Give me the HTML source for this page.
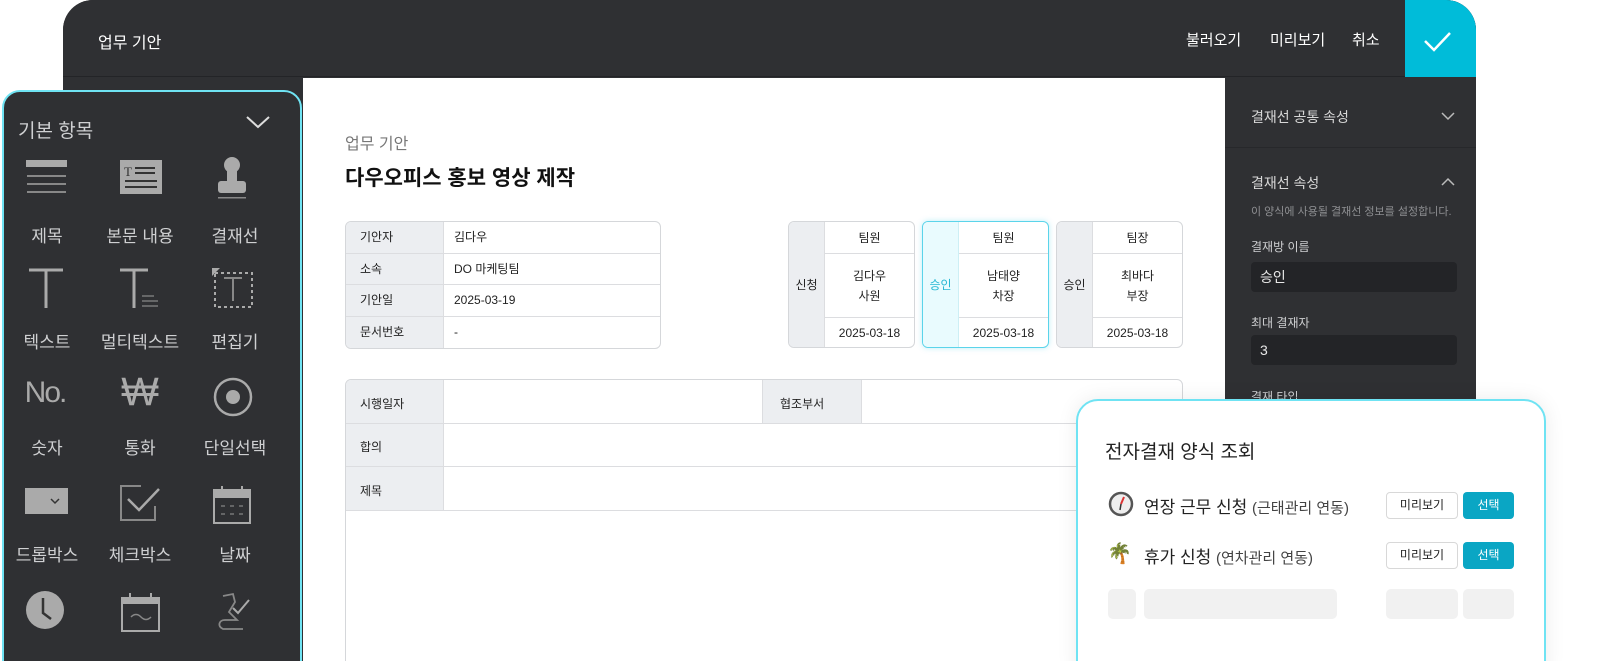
<!DOCTYPE html>
<html><head><meta charset="utf-8"><style>
*{box-sizing:border-box;margin:0;padding:0}
html,body{width:1600px;height:661px;overflow:hidden}
body{background:#fff;font-family:"Liberation Sans","Noto Sans CJK KR",sans-serif;color:#222}
#root{position:relative;width:1600px;height:661px;overflow:hidden}
.abs{position:absolute}
.frame{left:63px;top:0;width:1413px;height:661px;background:#2f3033;border-radius:30px 30px 0 0;overflow:hidden}
.topbar{left:0;top:0;width:1413px;height:77px;background:#2f3033;border-bottom:1px solid #232427}
.check{left:1342px;top:0;width:71px;height:77px;background:#00bcd9}
.canvas{left:240px;top:78px;width:922px;height:583px;background:#fff}
.rp{left:1162px;top:78px;width:251px;height:583px;background:#2f3033}
.lp{left:2px;top:90px;width:300px;height:590px;background:#2f3033;border:2px solid #6fe3f3;border-radius:18px}
.ic{position:absolute;width:100px;text-align:center;color:#cfd0d2;font-size:17px}
.t1{left:345px;top:221px;width:316px;border:1px solid #d5d7da;border-radius:6px;overflow:hidden;font-size:12px}
.t1 div{height:31.5px;display:flex;border-bottom:1px solid #dcdde0}
.t1 div:last-child{border-bottom:none}
.t1 b{font-weight:normal;width:98px;background:#eceef1;border-right:1px solid #dcdde0;padding:0 14px;line-height:31px}
.t1 span{padding:0 10px;line-height:31px}
.ap{top:221px;width:127px;height:127px;border:1px solid #d5d7da;border-radius:6px;overflow:hidden;font-size:12px}
.ap .l{position:absolute;left:0;top:0;width:36px;height:100%;background:#eceef1;border-right:1px solid #dcdde0;display:flex;align-items:center;justify-content:center}
.ap .c{position:absolute;left:36px;right:0;text-align:center}
.pop{left:1076px;top:399px;width:470px;height:290px;background:#fff;border:2px solid #6fe3f3;border-radius:22px;box-shadow:0 0 20px rgba(0,0,0,.08)}
.btn{position:absolute;width:72px;height:27px;border:1px solid #d8d8d8;border-radius:4px;font-size:12px;text-align:center;line-height:25px}
.sel{position:absolute;width:51px;height:27px;background:#0aa6c4;color:#fff;border-radius:4px;font-size:12px;text-align:center;line-height:27px}
.sk{position:absolute;background:#f1f1f1;border-radius:5px;height:30px;top:589px}
.rl{color:#cfd0d2;font-size:14px;position:absolute;left:1251px}
.inp{position:absolute;left:1251px;width:206px;height:30px;background:#232427;border-radius:4px;color:#e8e8e8;font-size:14px;padding-left:9px;line-height:30px}
</style></head><body><div id="root">
<div class="abs frame">
 <div class="abs topbar"></div>
 <div class="abs" style="left:35px;top:29px;color:#fff;font-size:16px">업무 기안</div>
 <div class="abs" style="left:1123px;top:29px;color:#fff;font-size:15px">불러오기</div>
 <div class="abs" style="left:1207px;top:29px;color:#fff;font-size:15px">미리보기</div>
 <div class="abs" style="left:1289px;top:29px;color:#fff;font-size:15px">취소</div>
 <div class="abs check"><svg width="71" height="77"><path d="M20 41 L29 50 L45 33" stroke="#fff" stroke-width="2.5" fill="none"/></svg></div>
 <div class="abs canvas"></div>
 <div class="abs rp">
  <div style="height:70px;border-bottom:1px solid #27282b"></div>
 </div>
</div>
<div class="abs" style="left:1251px;top:107px;color:#d8d8d8;font-size:14px">결재선 공통 속성</div>
<svg class="abs" style="left:1440px;top:110px" width="16" height="12"><path d="M2 3 L8 9 L14 3" stroke="#bbb" stroke-width="1.5" fill="none"/></svg>
<div class="abs" style="left:1251px;top:173px;color:#d8d8d8;font-size:14px">결재선 속성</div>
<svg class="abs" style="left:1440px;top:176px" width="16" height="12"><path d="M2 9 L8 3 L14 9" stroke="#bbb" stroke-width="1.5" fill="none"/></svg>
<div class="abs" style="left:1251px;top:203px;color:#8e8f92;font-size:11px">이 양식에 사용될 결재선 정보를 설정합니다.</div>
<div class="rl" style="top:238px;font-size:12px">결재방 이름</div>
<div class="inp" style="top:262px">승인</div>
<div class="rl" style="top:314px;font-size:12px">최대 결재자</div>
<div class="inp" style="top:335px">3</div>
<div class="rl" style="top:388px;font-size:12px">결재 타입</div>

<div class="abs" style="left:345px;top:130px;color:#777;font-size:16px">업무 기안</div>
<div class="abs" style="left:345px;top:162px;color:#111;font-size:21px;font-weight:bold">다우오피스 홍보 영상 제작</div>
<div class="abs t1">
 <div><b>기안자</b><span>김다우</span></div>
 <div><b>소속</b><span>DO 마케팅팀</span></div>
 <div><b>기안일</b><span>2025-03-19</span></div>
 <div><b>문서번호</b><span>-</span></div>
</div>
<div class="abs ap" style="left:788px"><div class="l">신청</div>
 <div class="c" style="top:0;height:32px;line-height:32px;border-bottom:1px solid #dcdde0">팀원</div>
 <div class="c" style="top:44px;line-height:20px">김다우<br>사원</div>
 <div class="c" style="top:95px;height:31px;line-height:31px;border-top:1px solid #dcdde0">2025-03-18</div></div>
<div class="abs ap" style="left:922px;border:1.5px solid #5bd4ea;box-shadow:0 0 6px rgba(90,210,235,.4)"><div class="l" style="background:#e9fbfe;color:#27b8d4;border-color:#cdeff5">승인</div>
 <div class="c" style="top:0;height:32px;line-height:32px;border-bottom:1px solid #dcdde0">팀원</div>
 <div class="c" style="top:44px;line-height:20px">남태양<br>차장</div>
 <div class="c" style="top:95px;height:31px;line-height:31px;border-top:1px solid #dcdde0">2025-03-18</div></div>
<div class="abs ap" style="left:1056px"><div class="l">승인</div>
 <div class="c" style="top:0;height:32px;line-height:32px;border-bottom:1px solid #dcdde0">팀장</div>
 <div class="c" style="top:44px;line-height:20px">최바다<br>부장</div>
 <div class="c" style="top:95px;height:31px;line-height:31px;border-top:1px solid #dcdde0">2025-03-18</div></div>

<div class="abs" style="left:345px;top:379px;width:838px;height:300px;border:1px solid #d5d7da;border-radius:6px;font-size:12px;overflow:hidden">
 <div class="abs" style="left:0;top:0;width:98px;height:130px;background:#eceef1;border-right:1px solid #dcdde0"></div>
 <div class="abs" style="left:416px;top:0;width:100px;height:43px;background:#eceef1;border-left:1px solid #dcdde0;border-right:1px solid #dcdde0"></div>
 <div class="abs" style="left:0;top:43px;width:838px;border-top:1px solid #dcdde0"></div>
 <div class="abs" style="left:0;top:86px;width:838px;border-top:1px solid #dcdde0"></div>
 <div class="abs" style="left:0;top:130px;width:838px;border-top:1px solid #dcdde0"></div>
 <div class="abs" style="left:14px;top:15px">시행일자</div>
 <div class="abs" style="left:434px;top:15px">협조부서</div>
 <div class="abs" style="left:14px;top:58px">합의</div>
 <div class="abs" style="left:14px;top:102px">제목</div>
</div>

<div class="abs lp"></div>
<div class="abs" style="left:18px;top:116px;color:#cfd0d2;font-size:19px">기본 항목</div>
<svg class="abs" style="left:245px;top:114px" width="26" height="16"><path d="M2 3 L13 13 L24 3" stroke="#ddd" stroke-width="2" fill="none"/></svg>
<svg class="abs" style="left:26px;top:160px" width="42" height="40"><rect x="0" y="0" width="41" height="7" fill="#aaa"/><rect x="1" y="15" width="39" height="2" fill="#888"/><rect x="1" y="23" width="39" height="2" fill="#888"/><rect x="1" y="31" width="39" height="2" fill="#888"/></svg>
<svg class="abs" style="left:120px;top:160px" width="42" height="36"><rect width="42" height="34" fill="#aaa"/><text x="4" y="16" font-size="13" fill="#333" font-family="Liberation Serif">T</text><rect x="15" y="7" width="20" height="2" fill="#333"/><rect x="15" y="12" width="20" height="2" fill="#333"/><rect x="5" y="20" width="32" height="2" fill="#333"/><rect x="5" y="26" width="32" height="2" fill="#333"/></svg>
<svg class="abs" style="left:210px;top:155px" width="44" height="46"><circle cx="22" cy="10" r="8" fill="#aaa"/><rect x="17" y="14" width="10" height="14" fill="#aaa"/><rect x="8" y="26" width="28" height="12" rx="3" fill="#aaa"/><rect x="8" y="42" width="28" height="1.5" fill="#888"/></svg>
<div class="ic" style="left:-3px;top:222px">제목</div>
<div class="ic" style="left:90px;top:222px">본문 내용</div>
<div class="ic" style="left:185px;top:222px">결재선</div>
<svg class="abs" style="left:27px;top:268px" width="40" height="42"><path d="M2 2 H36 M19 2 V40" stroke="#aaa" stroke-width="3"/></svg>
<svg class="abs" style="left:118px;top:268px" width="46" height="42"><path d="M2 2 H30 M16 2 V40" stroke="#aaa" stroke-width="3"/><path d="M24 28 H36 M24 33 H40 M24 38 H40" stroke="#888" stroke-width="1.2"/></svg>
<svg class="abs" style="left:212px;top:268px" width="44" height="42"><rect x="3" y="5" width="37" height="34" fill="none" stroke="#aaa" stroke-width="2" stroke-dasharray="3 3"/><path d="M0 0 L8 0 L0 8Z" fill="#aaa"/><path d="M12 10 H30 M21 10 V33" stroke="#888" stroke-width="2"/></svg>
<div class="ic" style="left:-3px;top:328px">텍스트</div>
<div class="ic" style="left:90px;top:328px">멀티텍스트</div>
<div class="ic" style="left:185px;top:328px">편집기</div>
<div class="ic" style="left:-5px;top:376px;font-size:30px;color:#aaa;letter-spacing:-2px">No.</div>
<div class="ic" style="left:90px;top:370px;font-size:40px;color:#aaa">₩</div>
<svg class="abs" style="left:212px;top:376px" width="42" height="42"><circle cx="21" cy="21" r="18" fill="none" stroke="#aaa" stroke-width="2.5"/><circle cx="21" cy="21" r="7" fill="#aaa"/></svg>
<div class="ic" style="left:-3px;top:434px">숫자</div>
<div class="ic" style="left:90px;top:434px">통화</div>
<div class="ic" style="left:185px;top:434px">단일선택</div>
<svg class="abs" style="left:25px;top:488px" width="44" height="30"><rect width="43" height="26" fill="#aaa"/><path d="M26 11 L30 15 L34 11" stroke="#333" stroke-width="1.5" fill="none"/></svg>
<svg class="abs" style="left:119px;top:484px" width="44" height="40"><path d="M22 2 H2 V36 H36 V22" stroke="#888" stroke-width="2" fill="none"/><path d="M9 15 L20 26 L40 5" stroke="#aaa" stroke-width="2.5" fill="none"/></svg>
<svg class="abs" style="left:213px;top:484px" width="40" height="42"><rect x="1" y="6" width="36" height="33" fill="none" stroke="#aaa" stroke-width="2"/><rect x="1" y="6" width="36" height="8" fill="#aaa"/><path d="M9 2V8M29 2V8" stroke="#aaa" stroke-width="2"/><path d="M8 22h4M17 22h4M26 22h4M8 30h4M17 30h4M26 30h4" stroke="#777" stroke-width="1.5"/></svg>
<div class="ic" style="left:-3px;top:541px">드롭박스</div>
<div class="ic" style="left:90px;top:541px">체크박스</div>
<div class="ic" style="left:185px;top:541px">날짜</div>
<svg class="abs" style="left:25px;top:590px" width="42" height="42"><circle cx="20" cy="20" r="19" fill="#aaa"/><path d="M18 8 V23 L26 29" stroke="#333" stroke-width="2.5" fill="none"/></svg>
<svg class="abs" style="left:121px;top:592px" width="42" height="42"><rect x="1" y="6" width="37" height="33" fill="none" stroke="#aaa" stroke-width="2"/><rect x="1" y="6" width="37" height="6" fill="#aaa"/><path d="M9 1V8M30 1V8" stroke="#aaa" stroke-width="2"/><path d="M10 25 q5 -5 10 0 t10 0" stroke="#888" stroke-width="1.5" fill="none"/></svg>
<svg class="abs" style="left:213px;top:592px" width="42" height="42"><path d="M10 4 L20 2 L22 10 L16 20 L24 28 H12 C6 28 4 34 10 37 H30" stroke="#888" stroke-width="1.8" fill="none"/><path d="M20 16 L25 21 L36 8" stroke="#aaa" stroke-width="2" fill="none"/></svg>

<div class="abs pop"></div>
<div class="abs" style="left:1105px;top:437px;font-size:19px;color:#222">전자결재 양식 조회</div>
<svg class="abs" style="left:1108px;top:491px" width="26" height="26"><circle cx="13" cy="13" r="11" fill="#eee" stroke="#555" stroke-width="2.5"/><path d="M13 13 L16 6" stroke="#d33" stroke-width="2"/><path d="M13 13 L12 19" stroke="#333" stroke-width="1.5"/></svg>
<div class="abs" style="left:1144px;top:493px;font-size:17px;color:#222">연장 근무 신청 <span style="font-size:15px;color:#444">(근태관리 연동)</span></div>
<div class="btn" style="left:1386px;top:492px">미리보기</div><div class="sel" style="left:1463px;top:492px">선택</div>
<div class="abs" style="left:1107px;top:541px;font-size:20px">🌴</div>
<div class="abs" style="left:1144px;top:543px;font-size:17px;color:#222">휴가 신청 <span style="font-size:15px;color:#444">(연차관리 연동)</span></div>
<div class="btn" style="left:1386px;top:542px">미리보기</div><div class="sel" style="left:1463px;top:542px">선택</div>
<div class="sk" style="left:1108px;width:28px"></div>
<div class="sk" style="left:1144px;width:193px"></div>
<div class="sk" style="left:1386px;width:72px"></div>
<div class="sk" style="left:1463px;width:51px"></div>
</div></body></html>
